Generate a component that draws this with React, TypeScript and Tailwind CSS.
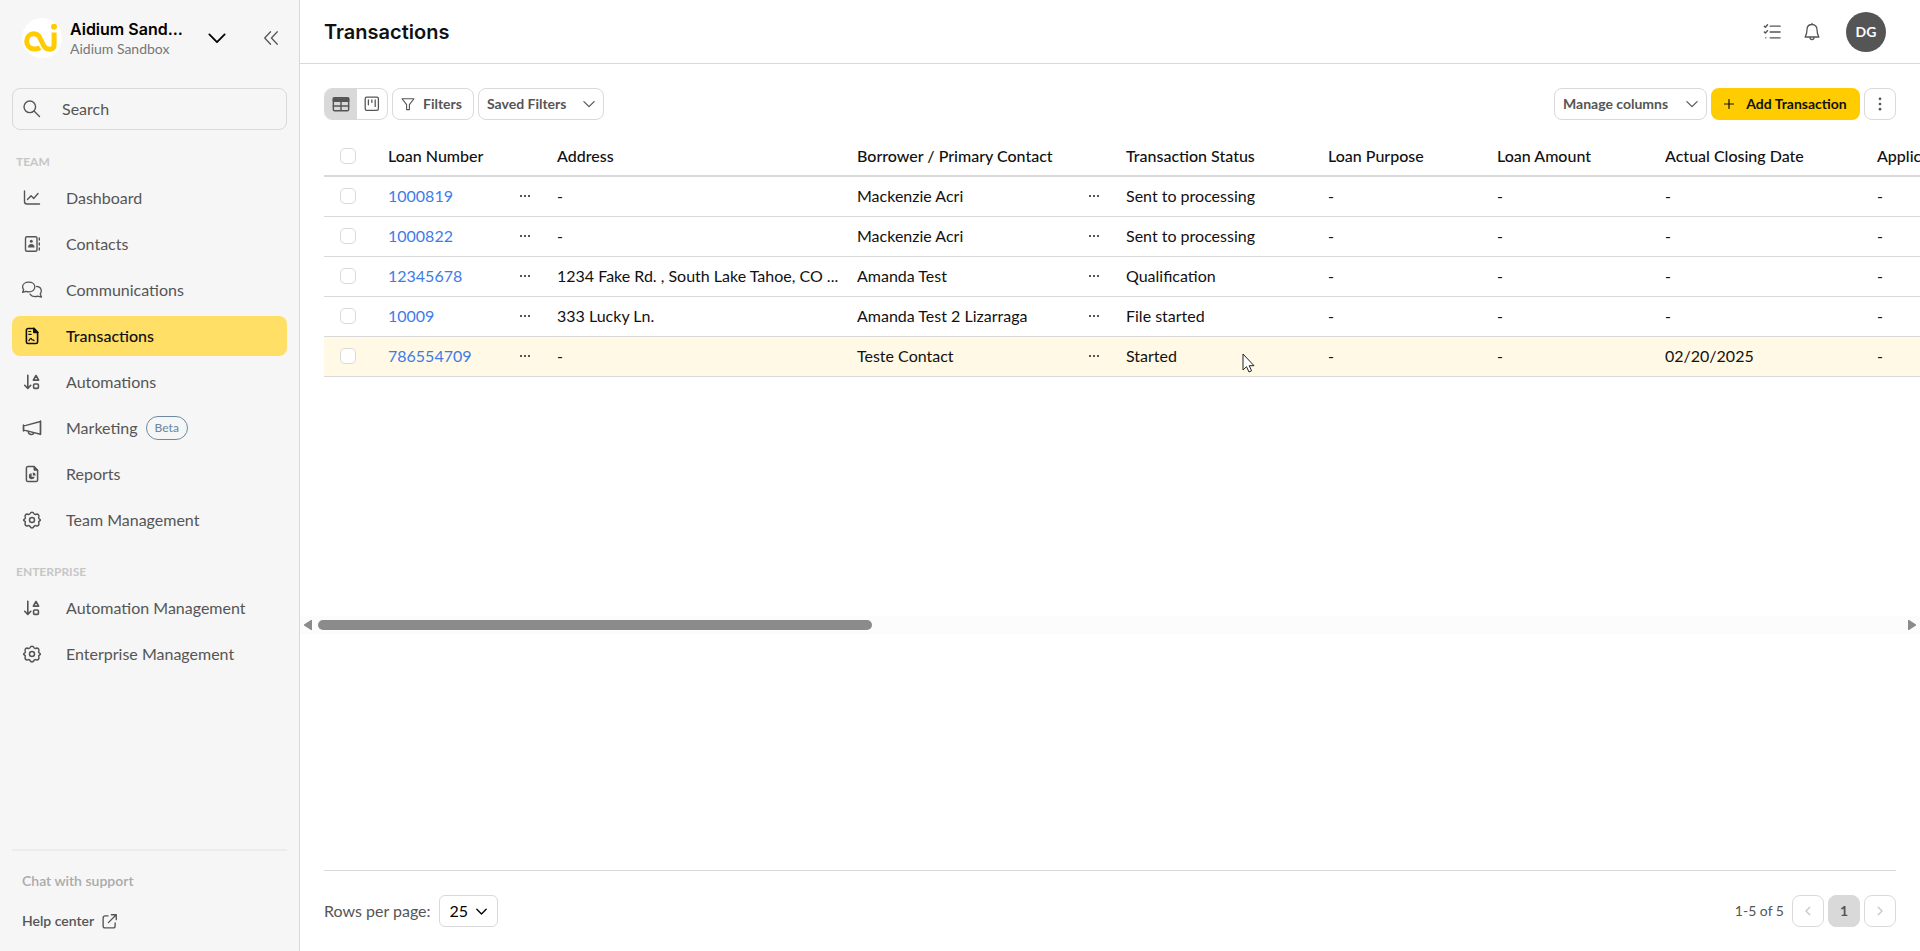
import type { ReactNode } from "react";

function Svg({ children, size = 20, sw = 1.4 }: { children: ReactNode; size?: number; sw?: number }) {
  return (
    <svg width={size} height={size} viewBox="0 0 20 20" fill="none" stroke="currentColor" strokeWidth={sw}
         strokeLinecap="round" strokeLinejoin="round" className="shrink-0" aria-hidden="true">
      {children}
    </svg>
  );
}

const ChartIcon = () => (
  <Svg>
    <path d="M2.5 3v10.5A2.5 2.5 0 0 0 5 16h12.500" />
    <path d="M5.500 11.500 9 7.800l2.800 2.600L16 5.500" />
  </Svg>
);

const ContactsIcon = () => (
  <Svg>
    <rect x="3.500" y="2.700" width="11.500" height="14.600" rx="1.500" />
    <path d="M17.300 4v2M17.300 9v2M17.300 14v2" />
    <circle cx="9.300" cy="7.300" r="1.500" fill="currentColor" stroke="none" />
    <path d="M6 13.500c0-2.200 1.200-3.500 3.300-3.500s3.300 1.300 3.300 3.500z" fill="currentColor" stroke="none" />
  </Svg>
);

const ChatsIcon = () => (
  <Svg sw={1.3}>
    <path d="M6.800 2.200c3.500 0 6 2 6 4.800s-2.500 4.800-6 4.800c-1 0-1.900-.2-2.700-.5L.6 12.300l1.100-2.500C1 9 .6 8 .6 7c0-2.800 2.700-4.800 6.200-4.800z" />
    <path d="M14.600 6.400c2.700.3 4.700 2.200 4.700 4.600 0 1.100-.4 2-1.100 2.900l1.300 3.200-3.800-1c-.8.3-1.600.5-2.500.5-2.300 0-4.300-1-5.200-2.600" />
  </Svg>
);

const TransactionIcon = () => (
  <Svg sw={1.6}>
    <path d="M12 2.500H6a1.600 1.600 0 0 0-1.600 1.600v11.800A1.600 1.600 0 0 0 6 17.500h8a1.600 1.600 0 0 0 1.600-1.600V6.200z" />
    <path d="M11.800 2.300v4.200h4z" fill="currentColor" />
    <path d="M6.800 5.500h2M6.800 8.300h2.400" strokeWidth="1.200" />
    <path d="M7 14.600c1.300-2.600 2-2.600 2.600-1.300.6 1.100 1.500.1 2.400 1.300" strokeWidth="1.300" />
  </Svg>
);

const SortIcon = () => (
  <Svg sw={1.6}>
    <path d="M5.800 3.300v13M2.700 13.300l3.100 3.100 3-3.100" />
    <path d="M14 3.500l-2.700 4.600h5.400z" />
    <rect x="11.600" y="12" width="4.800" height="4.400" rx="1" />
  </Svg>
);

const MegaphoneIcon = () => (
  <Svg>
    <path d="M1.500 7.800v4.400l2.500.4 14.500 3.600V3.500L4 7.400z" />
    <path d="M1.500 7v6M18.500 3v13.600M6.200 13.300c0 4 5.200 4 5.600 1.300" />
  </Svg>
);

const ReportIcon = () => (
  <Svg sw={1.5}>
    <path d="M12 2.500H6a1.600 1.600 0 0 0-1.600 1.600v11.800A1.600 1.600 0 0 0 6 17.500h8a1.600 1.600 0 0 0 1.600-1.600V6.200z" />
    <path d="M12 2.500v3.700h3.500z" fill="currentColor" strokeWidth="1" />
    <path d="M9.600 9.200a3 3 0 1 0 3.200 3.500H9.600z" fill="currentColor" stroke="none" />
    <path d="M10.800 8.400v3h3c0-1.800-1.300-3-3-3z" fill="currentColor" stroke="none" />
  </Svg>
);

const GearIcon = () => (
  <Svg sw={1.5}>
    <path d="M8.100 3.500c.7-1.700 3.100-1.700 3.800 0 .4.900 1.300 1.200 2.200.8 1.800-.7 3.400 1 2.700 2.700-.4.900 0 1.800.7 2.100 1.200.6 1.200 1.300 0 1.900-.7.400-1.100 1.200-.7 2.100.7 1.800-.9 3.400-2.700 2.700-.9-.4-1.800-.1-2.200.8-.7 1.700-3.100 1.700-3.800 0-.4-.9-1.300-1.200-2.200-.8-1.800.7-3.400-.9-2.700-2.700.4-.9 0-1.700-.7-2.100-1.200-.6-1.200-1.300 0-1.900.7-.3 1.100-1.200.7-2.100-.7-1.700.9-3.400 2.700-2.700.9.400 1.800.1 2.200-.8z" />
    <circle cx="10" cy="10" r="2.500" />
  </Svg>
);

const ChevronDown = ({ size = 12, sw = 2 }: { size?: number; sw?: number }) => (
  <Svg size={size} sw={sw}>
    <path d="M1.500 6 10 14.500 18.500 6" />
  </Svg>
);

interface NavItem {
  label: string;
  icon: () => ReactNode;
  active?: boolean;
  badge?: string;
}

const TEAM: NavItem[] = [
  { label: "Dashboard",       icon: ChartIcon },
  { label: "Contacts",        icon: ContactsIcon },
  { label: "Communications",  icon: ChatsIcon },
  { label: "Transactions",    icon: TransactionIcon, active: true },
  { label: "Automations",     icon: SortIcon },
  { label: "Marketing",       icon: MegaphoneIcon, badge: "Beta" },
  { label: "Reports",         icon: ReportIcon },
  { label: "Team Management", icon: GearIcon },
];

const ENTERPRISE: NavItem[] = [
  { label: "Automation Management", icon: SortIcon },
  { label: "Enterprise Management", icon: GearIcon },
];

function NavGroup({ title, items }: { title: string; items: NavItem[] }) {
  return (
    <section>
      <h2 className="px-1 text-xs leading-4 font-bold text-[#c6c6c6]">{title}</h2>
      <ul className="mt-2 flex flex-col gap-1.5">
        {items.map(({ label, icon: Icon, active, badge }) => (
          <li key={label}>
            <a href="#" className={`flex h-10 items-center rounded-lg px-[10px] text-base ${
              active ? "bg-[#ffdf66] font-medium text-[#111]" : "text-[#555]"}`}>
              <Icon />
              <span className="ml-6">{label}</span>
              {badge && (
                <span className="ml-2 flex h-6 items-center rounded-full border border-[#6b8ba4] px-2 text-xs font-medium text-[#6b8ba4]">
                  {badge}
                </span>
              )}
            </a>
          </li>
        ))}
      </ul>
    </section>
  );
}

function Sidebar() {
  return (
    <aside className="flex w-[300px] shrink-0 flex-col border-r border-[#d9d9d9] bg-[#f6f6f6] px-3">
      <div className="flex h-[76px] items-center pl-[10px]">
        <svg width="40" height="40" viewBox="0 0 40 40" className="shrink-0" aria-hidden="true">
          <circle cx="20" cy="20" r="20" fill="#fff" />
          <path d="M18 29.600C16 31 14 31.200 12 31 7.500 30.600 4.700 27.400 4.700 23.200c0-4.300 3-7.500 7-7.500 3.500 0 5.300 2 6.500 4.800l3.200 6.500c1.200 2.700 3.200 4.200 6 4.200 3.400 0 4.700-1.600 4.700-5V14.500"
                fill="none" stroke="#fc0" strokeWidth="5" />
          <circle cx="32" cy="8.800" r="3" fill="#fc0" />
        </svg>
        <div className="ml-2 w-[124px] pt-0.5">
          <div className="truncate font-['Inter',sans-serif] text-base leading-5 font-semibold text-black">Aidium Sand...</div>
          <div className="text-sm leading-5 text-[#777]">Aidium Sandbox</div>
        </div>
        <button className="ml-[14px] text-black" aria-label="Switch workspace"><ChevronDown size={18} /></button>
        <button className="mr-[7px] ml-auto text-[#555]" aria-label="Collapse menu">
          <Svg size={18}><path d="M9.500 3 3 10l6.500 7M17 3l-6.500 7 6.500 7" /></Svg>
        </button>
      </div>

      <label className="mt-3 flex h-[42px] items-center rounded-lg border border-[#d9d9d9] px-[9px] text-[#555]">
        <Svg><circle cx="7.800" cy="7.800" r="5.800" /><path d="m12 12 5.500 5.500" /></Svg>
        <input type="text" placeholder="Search" aria-label="Search"
               className="ml-5 w-full bg-transparent text-base outline-none placeholder:text-[#555]" />
      </label>

      <nav className="mt-6 flex flex-col gap-6">
        <NavGroup title="TEAM" items={TEAM} />
        <NavGroup title="ENTERPRISE" items={ENTERPRISE} />
      </nav>

      <div className="mt-auto flex flex-col gap-5 border-t-2 border-[#ececec] px-[10px] pt-5 pb-5 text-sm font-semibold">
        <a href="#" className="text-[#aaa]">Chat with support</a>
        <a href="#" className="flex items-center gap-2 text-[#555]">
          Help center
          <Svg size={15} sw={1.8}>
            <path d="M8 2.500H4A2.500 2.500 0 0 0 1.500 5v11A2.500 2.500 0 0 0 4 18.500h11a2.500 2.500 0 0 0 2.500-2.500v-4M12.500 1H19v6.500M19 1 8.500 11.500" />
          </Svg>
        </a>
      </div>
    </aside>
  );
}

const OUTLINE = "flex h-8 items-center rounded-lg border border-[#d9d9d9] bg-white text-sm font-bold text-[#555]";

function Toolbar() {
  return (
    <div className="flex flex-wrap items-center gap-1 px-6 pt-6">
      <div className="flex h-8 overflow-hidden rounded-lg border border-[#d9d9d9] text-[#555]">
        <button className="flex w-8 items-center justify-center bg-[#d9d9d9]" aria-label="Table view">
          <Svg size={18} sw={1.6}>
            <rect x="1.500" y="3" width="17" height="14.500" rx="1.500" />
            <path d="M1.500 3.500h17V7h-17z" fill="currentColor" />
            <path d="M1.500 12.200h17M10 7v10" />
          </Svg>
        </button>
        <button className="flex w-[30px] items-center justify-center" aria-label="Board view">
          <Svg size={16} sw={1.6}>
            <rect x="1.500" y="1.500" width="16.500" height="16.500" rx="2" />
            <path d="M5.500 5v6M9.800 5v3M14 5v8" />
          </Svg>
        </button>
      </div>
      <button className={`${OUTLINE} w-[82px] gap-2 px-2`}>
        <Svg size={14} sw={1.6}><path d="M1.500 2.500h17L12 11v7H8v-7z" /></Svg>
        Filters
      </button>
      <button className={`${OUTLINE} w-[126px] justify-between px-2`}>Saved Filters <ChevronDown /></button>
      <button className={`${OUTLINE} ml-auto w-[153px] justify-between px-2`}>Manage columns <ChevronDown /></button>
      <button className="flex h-8 w-[149px] items-center justify-center gap-3 rounded-lg bg-[#fc0] text-sm font-bold text-[#111]">
        <Svg size={10} sw={2.4}><path d="M10 1v18M1 10h18" /></Svg>
        Add Transaction
      </button>
      <button className={`${OUTLINE} w-8 justify-center`} aria-label="More actions">
        <Svg size={16}>
          <g fill="currentColor" stroke="none">
            <circle cx="10" cy="3.500" r="1.700" />
            <circle cx="10" cy="10" r="1.700" />
            <circle cx="10" cy="16.500" r="1.700" />
          </g>
        </Svg>
      </button>
    </div>
  );
}

const COLUMNS = [
  { label: "Loan Number",                width: "w-[169px]" },
  { label: "Address",                    width: "w-[300px]" },
  { label: "Borrower / Primary Contact", width: "w-[269px]" },
  { label: "Transaction Status",         width: "w-[202px]" },
  { label: "Loan Purpose",               width: "w-[169px]" },
  { label: "Loan Amount",                width: "w-[168px]" },
  { label: "Actual Closing Date",        width: "w-[212px]" },
  { label: "Application Date",           width: "w-[200px]" },
];

const ROWS = [
  { loan: "1000819",   address: "-", contact: "Mackenzie Acri", status: "Sent to processing", closing: "-" },
  { loan: "1000822",   address: "-", contact: "Mackenzie Acri", status: "Sent to processing", closing: "-" },
  { loan: "12345678",  address: "1234 Fake Rd. , South Lake Tahoe, CO ...", contact: "Amanda Test", status: "Qualification", closing: "-" },
  { loan: "10009",     address: "333 Lucky Ln.", contact: "Amanda Test 2 Lizarraga", status: "File started", closing: "-" },
  { loan: "786554709", address: "-", contact: "Teste Contact", status: "Started", closing: "02/20/2025", hover: true },
];

const CHECKBOX = "mx-4 block h-4 w-4 appearance-none rounded-[5px] border border-[#d9d9d9] bg-white";

function RowMenu() {
  return (
    <button className="flex w-4 justify-center text-[#555]" aria-label="Open cell menu">
      <svg width="10" height="2" viewBox="0 0 10 2" fill="currentColor" aria-hidden="true">
        <path d="M0 0h2v2H0zM4 0h2v2H4zM8 0h2v2H8z" />
      </svg>
    </button>
  );
}

function TransactionsTable() {
  return (
    <div className="mt-4 overflow-hidden pb-[239px] pl-6">
      <table className="w-[1745px] table-fixed border-collapse text-left text-base text-[#111]">
        <thead>
          <tr className="h-10 border-b-2 border-[#d9d9d9]">
            <th className="w-14"><input type="checkbox" aria-label="Select all rows" className={CHECKBOX} /></th>
            {COLUMNS.map((c) => (
              <th key={c.label} className={`${c.width} px-2 font-medium whitespace-nowrap`}>{c.label}</th>
            ))}
          </tr>
        </thead>
        <tbody>
          {ROWS.map((r) => (
            <tr key={r.loan} className={`h-10 border-b border-[#d9d9d9] ${r.hover ? "bg-[#fff9e5]" : ""}`}>
              <td><input type="checkbox" aria-label={`Select ${r.loan}`} className={CHECKBOX} /></td>
              <td className="px-2">
                <div className="flex items-center justify-between pr-2">
                  <a href="#" className="text-[#3e7bea]">{r.loan}</a>
                  <RowMenu />
                </div>
              </td>
              <td className="truncate px-2">{r.address}</td>
              <td className="px-2">
                <div className="flex items-center justify-between pr-2">
                  {r.contact}
                  <RowMenu />
                </div>
              </td>
              <td className="relative px-2">
                {r.status}
                {r.hover && (
                  <svg width="13" height="20" viewBox="0 0 13 20" className="absolute top-4 left-[124px]" aria-hidden="true">
                    <path d="M1 1v16l3.500-3.300L7 19l2.600-1.200-2.400-5.100H12z" fill="#fff" stroke="#222" strokeWidth="1" />
                  </svg>
                )}
              </td>
              <td className="px-2">-</td>
              <td className="px-2">-</td>
              <td className="px-2">{r.closing}</td>
              <td className="px-2">-</td>
            </tr>
          ))}
        </tbody>
      </table>
    </div>
  );
}

function ScrollTrack() {
  return (
    <div className="flex h-[18px] items-center bg-[#fcfcfc] px-1 text-[#8b8b8b]">
      <svg width="8" height="10" viewBox="0 0 8 10" fill="currentColor" aria-hidden="true"><path d="M8 0v10H7L0 5.500v-1L7 0z" /></svg>
      <div className="mx-1.5 flex-1">
        <div className="h-[10px] w-[35%] rounded-full bg-[#8b8b8b]" />
      </div>
      <svg width="8" height="10" viewBox="0 0 8 10" fill="currentColor" aria-hidden="true"><path d="M0 0v10h1l7-4.500v-1L1 0z" /></svg>
    </div>
  );
}

const PAGER = "flex h-8 w-8 items-center justify-center rounded-lg border border-[#d9d9d9]";

function Pagination() {
  return (
    <footer className="mx-6 mt-auto flex h-[81px] items-center border-t border-[#d9d9d9] text-[#555]">
      <label htmlFor="rows" className="text-base">Rows per page:</label>
      <div className="relative ml-2 flex items-center text-black">
        <select id="rows" defaultValue="25"
                className="h-8 w-[59px] appearance-none rounded-md border border-[#d9d9d9] bg-white pl-[10px] text-base">
          <option>25</option>
          <option>50</option>
          <option>100</option>
        </select>
        <span className="pointer-events-none absolute right-[11px]"><ChevronDown size={11} sw={2.4} /></span>
      </div>
      <div className="ml-auto flex items-center gap-1 text-sm">
        <span className="mr-1">1-5 of 5</span>
        <button className={`${PAGER} text-[#c6c6c6]`} aria-label="Previous page">
          <Svg size={10} sw={2.6}><path d="M13.500 2.500 6 10l7.500 7.500" /></Svg>
        </button>
        <button className={`${PAGER} bg-[#d9d9d9] font-bold`}>1</button>
        <button className={`${PAGER} text-[#c6c6c6]`} aria-label="Next page">
          <Svg size={10} sw={2.6}><path d="M6.500 2.500 14 10l-7.500 7.500" /></Svg>
        </button>
      </div>
    </footer>
  );
}

export default function App() {
  return (
    <div className="flex min-h-screen bg-white font-['Lato',sans-serif]">
      <Sidebar />
      <main className="flex min-w-0 flex-1 flex-col">
        <header className="flex h-16 shrink-0 items-center border-b border-[#d9d9d9] px-6">
          <h1 className="font-['Inter',sans-serif] text-xl font-semibold text-[#111]">Transactions</h1>
          <div className="mr-[10px] ml-auto flex items-center text-[#555]">
            <button aria-label="Tasks">
              <Svg size={18} sw={1.6}>
                <path d="M8 3.500h11M8 10h11M8 16.500h11M1.500 3.500l1.200 1.200L5 2M1.500 10l1.200 1.200L5 8.500M3 16.500h.2" />
              </Svg>
            </button>
            <button className="ml-[21px]" aria-label="Notifications">
              <Svg sw={1.3}>
                <path d="M10 2.500c-3.200 0-5 2.300-5 5.300 0 3.500-.8 5.500-1.900 7.200h13.800c-1.100-1.700-1.900-3.700-1.900-7.200 0-3-1.800-5.300-5-5.300zM10 1.300v1M8 15.500c0 2.800 4 2.800 4 0" />
              </Svg>
            </button>
            <button className="ml-6 h-10 w-10 rounded-full bg-[#555] text-sm font-bold text-white">DG</button>
          </div>
        </header>
        <Toolbar />
        <TransactionsTable />
        <ScrollTrack />
        <Pagination />
      </main>
    </div>
  );
}
